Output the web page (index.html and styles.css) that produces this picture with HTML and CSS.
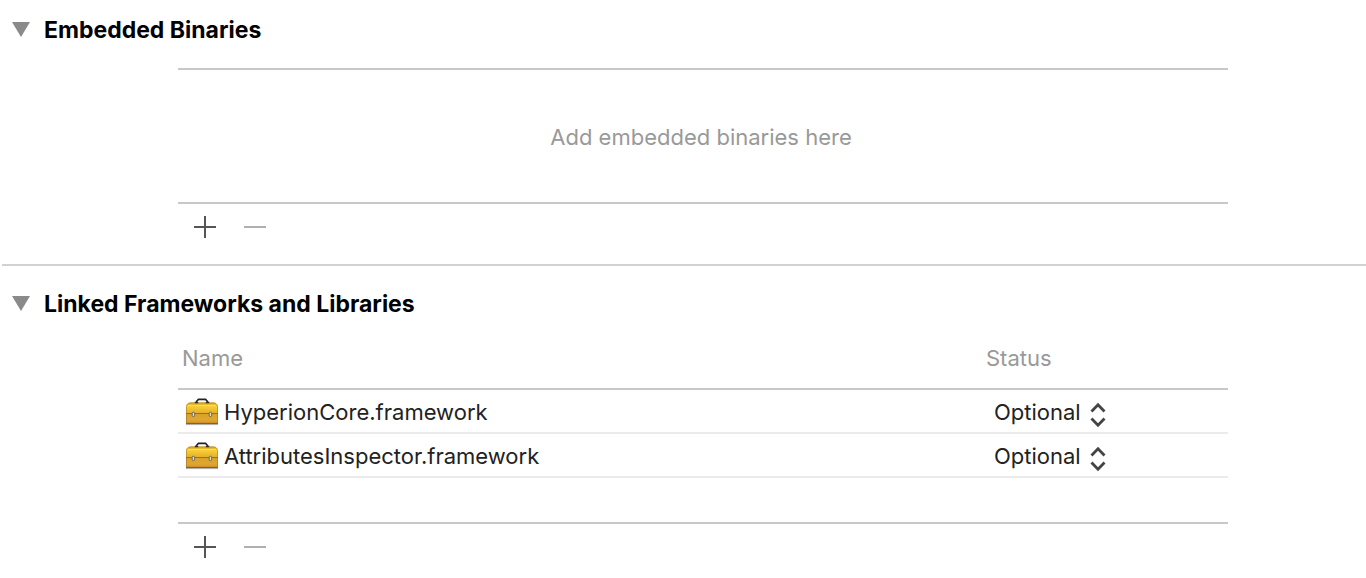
FILE: index.html
```html
<!DOCTYPE html>
<html lang="en">
<head>
<meta charset="utf-8">
<meta name="viewport" content="width=device-width, initial-scale=1">
<title>Target settings</title>
<link rel="stylesheet" href="styles.css">
</head>
<body>
<svg class="defs" width="0" height="0" aria-hidden="true">
  <defs>
    <linearGradient id="lid" x1="0" y1="0" x2="0" y2="1">
      <stop offset="0" stop-color="#d9a520"/>
      <stop offset=".3" stop-color="#f7cf36"/>
      <stop offset="1" stop-color="#e3ac28"/>
    </linearGradient>
    <linearGradient id="base" x1="0" y1="0" x2="0" y2="1">
      <stop offset="0" stop-color="#d9a02c"/>
      <stop offset=".6" stop-color="#e0a62e"/>
      <stop offset="1" stop-color="#d4972a"/>
    </linearGradient>
    <symbol id="toolbox" viewBox="0 0 32 28">
      <path d="M0 26.500h32" stroke="#b0b0b0" stroke-width="1.200"/>
      <path d="M.5 16V8.500Q.6 6.500 2 5.600 3 4.800 5 4.800h22q2 0 3 .8 1.400.9 1.500 2.900V16z" fill="url(#lid)" stroke="#b98518" stroke-width=".8"/>
      <path d="M2 7.500h28" stroke="#ffe04a" stroke-width="1"/>
      <path d="M10.500 4.600V3.600L12.400 1.400h7.200l1.900 2.200v1" fill="none" stroke="#222" stroke-width="1.600"/>
      <path d="M8.800 4.600h3.400M19.800 4.600h3.400" stroke="#333" stroke-width="1.500"/>
      <path d="M.5 15.500h31v10H.5z" fill="url(#base)" stroke="#a87316" stroke-width=".8"/>
      <path d="M0 15.500h32" stroke="#a36e18" stroke-width="1"/>
      <path d="M0 25.400h32" stroke="#85580f" stroke-width=".9"/>
      <rect x="6.200" y="14.200" width="2.400" height="4.400" rx="1.200" fill="#ddd" stroke="#5a5a50" stroke-width=".9"/>
      <rect x="23.200" y="14.200" width="2.400" height="4.400" rx="1.200" fill="#ddd" stroke="#5a5a50" stroke-width=".9"/>
    </symbol>
    <symbol id="triangle" viewBox="0 0 18 16"><path d="M0 0h18L9 15z" fill="#8a8a8a"/></symbol>
    <symbol id="plus" viewBox="0 0 22 22"><path d="M0 11h22M11 0v22" stroke="currentColor" stroke-width="2"/></symbol>
    <symbol id="minus" viewBox="0 0 22 22"><path d="M0 11h22" stroke="currentColor" stroke-width="2"/></symbol>
    <symbol id="updown" viewBox="0 0 16 26"><path d="M1.500 9.500L8 2.800l6.500 6.700M1.500 16.500l6.500 6.700 6.500-6.700" fill="none" stroke="#444" stroke-width="2.800"/></symbol>
  </defs>
</svg>

<section class="panel panel-first">
  <h2 class="title">
    <button class="disclosure" type="button" aria-expanded="true"><svg class="triangle"><use href="#triangle"/></svg>Embedded Binaries</button>
  </h2>
  <div class="content">
    <div class="list empty">Add embedded binaries here</div>
    <div class="actions">
      <button class="action" type="button" aria-label="Add binary"><svg class="action-icon"><use href="#plus"/></svg></button>
      <button class="action" type="button" aria-label="Remove binary" disabled><svg class="action-icon"><use href="#minus"/></svg></button>
    </div>
  </div>
</section>

<hr class="divider">

<section class="panel">
  <h2 class="title">
    <button class="disclosure" type="button" aria-expanded="true"><svg class="triangle"><use href="#triangle"/></svg>Linked Frameworks and Libraries</button>
  </h2>
  <div class="content">
    <div class="list filled">
      <table class="frameworks">
        <thead>
          <tr><th class="name" scope="col">Name</th><th class="status" scope="col">Status</th></tr>
        </thead>
        <tbody>
          <tr>
            <td><div class="file"><svg class="toolbox"><use href="#toolbox"/></svg><span id="fw-core">HyperionCore.framework</span></div></td>
            <td><div class="picker"><select class="select" aria-labelledby="fw-core"><option>Required</option><option selected>Optional</option></select><svg class="updown"><use href="#updown"/></svg></div></td>
          </tr>
          <tr>
            <td><div class="file"><svg class="toolbox"><use href="#toolbox"/></svg><span id="fw-attr">AttributesInspector.framework</span></div></td>
            <td><div class="picker"><select class="select" aria-labelledby="fw-attr"><option>Required</option><option selected>Optional</option></select><svg class="updown"><use href="#updown"/></svg></div></td>
          </tr>
        </tbody>
      </table>
    </div>
    <div class="actions">
      <button class="action" type="button" aria-label="Add framework"><svg class="action-icon"><use href="#plus"/></svg></button>
      <button class="action" type="button" aria-label="Remove framework" disabled><svg class="action-icon"><use href="#minus"/></svg></button>
    </div>
  </div>
</section>
</body>
</html>
```

FILE: styles.css
```css
* { box-sizing: border-box; }
body {
  margin: 0;
  background: #fff;
  color: #222;
  font: 22px/28px Inter, "Liberation Sans", sans-serif;
}
svg { display: block; flex: none; }
button, select { font: inherit; color: inherit; background: none; border: 0; padding: 0; }
.defs { position: absolute; }

.panel { padding: 24px 0 8px; }
.panel-first { padding: 16px 0 14px; }
.divider { margin: 0 0 0 2px; border: 0; height: 2px; background: #d2d2d2; }

.title { margin: 0 0 24px; padding-left: 12px; font-size: 23px; }
.disclosure { display: flex; align-items: center; gap: 14px; color: #000; font-weight: 700; }
.triangle { width: 18px; height: 16px; }

.content { margin: 0 138px 0 178px; }
.list { border-bottom: 2px solid #c8c8c8; }
.empty { border-top: 2px solid #c8c8c8; padding: 53px 4px 51px 0; text-align: center; color: #999; }
.filled { padding-bottom: 44px; }

.frameworks { width: 100%; table-layout: fixed; border-collapse: separate; border-spacing: 0; }
th { padding: 0 0 14px 4px; border-bottom: 2px solid #c8c8c8; color: #999; font-weight: 400; line-height: 32px; text-align: left; }
.status { width: 246px; }
td { height: 44px; padding: 2px 0 0; border-bottom: 2px solid #ebebeb; }
.file { display: flex; align-items: center; gap: 6px; padding-left: 8px; }
.toolbox { width: 32px; height: 28px; }

.picker { display: grid; align-items: center; width: 124px; height: 32px; padding-left: 12px; }
.select { grid-area: 1 / 1; appearance: none; width: 100%; height: 28px; }
.updown { grid-area: 1 / 1; justify-self: end; align-self: end; width: 16px; height: 26px; pointer-events: none; }

.actions { display: flex; padding-left: 2px; }
.action { display: grid; place-items: center; width: 50px; height: 46px; color: #555; }
.action:disabled { color: #b0b0b0; }
.action-icon { width: 22px; height: 22px; }
```
